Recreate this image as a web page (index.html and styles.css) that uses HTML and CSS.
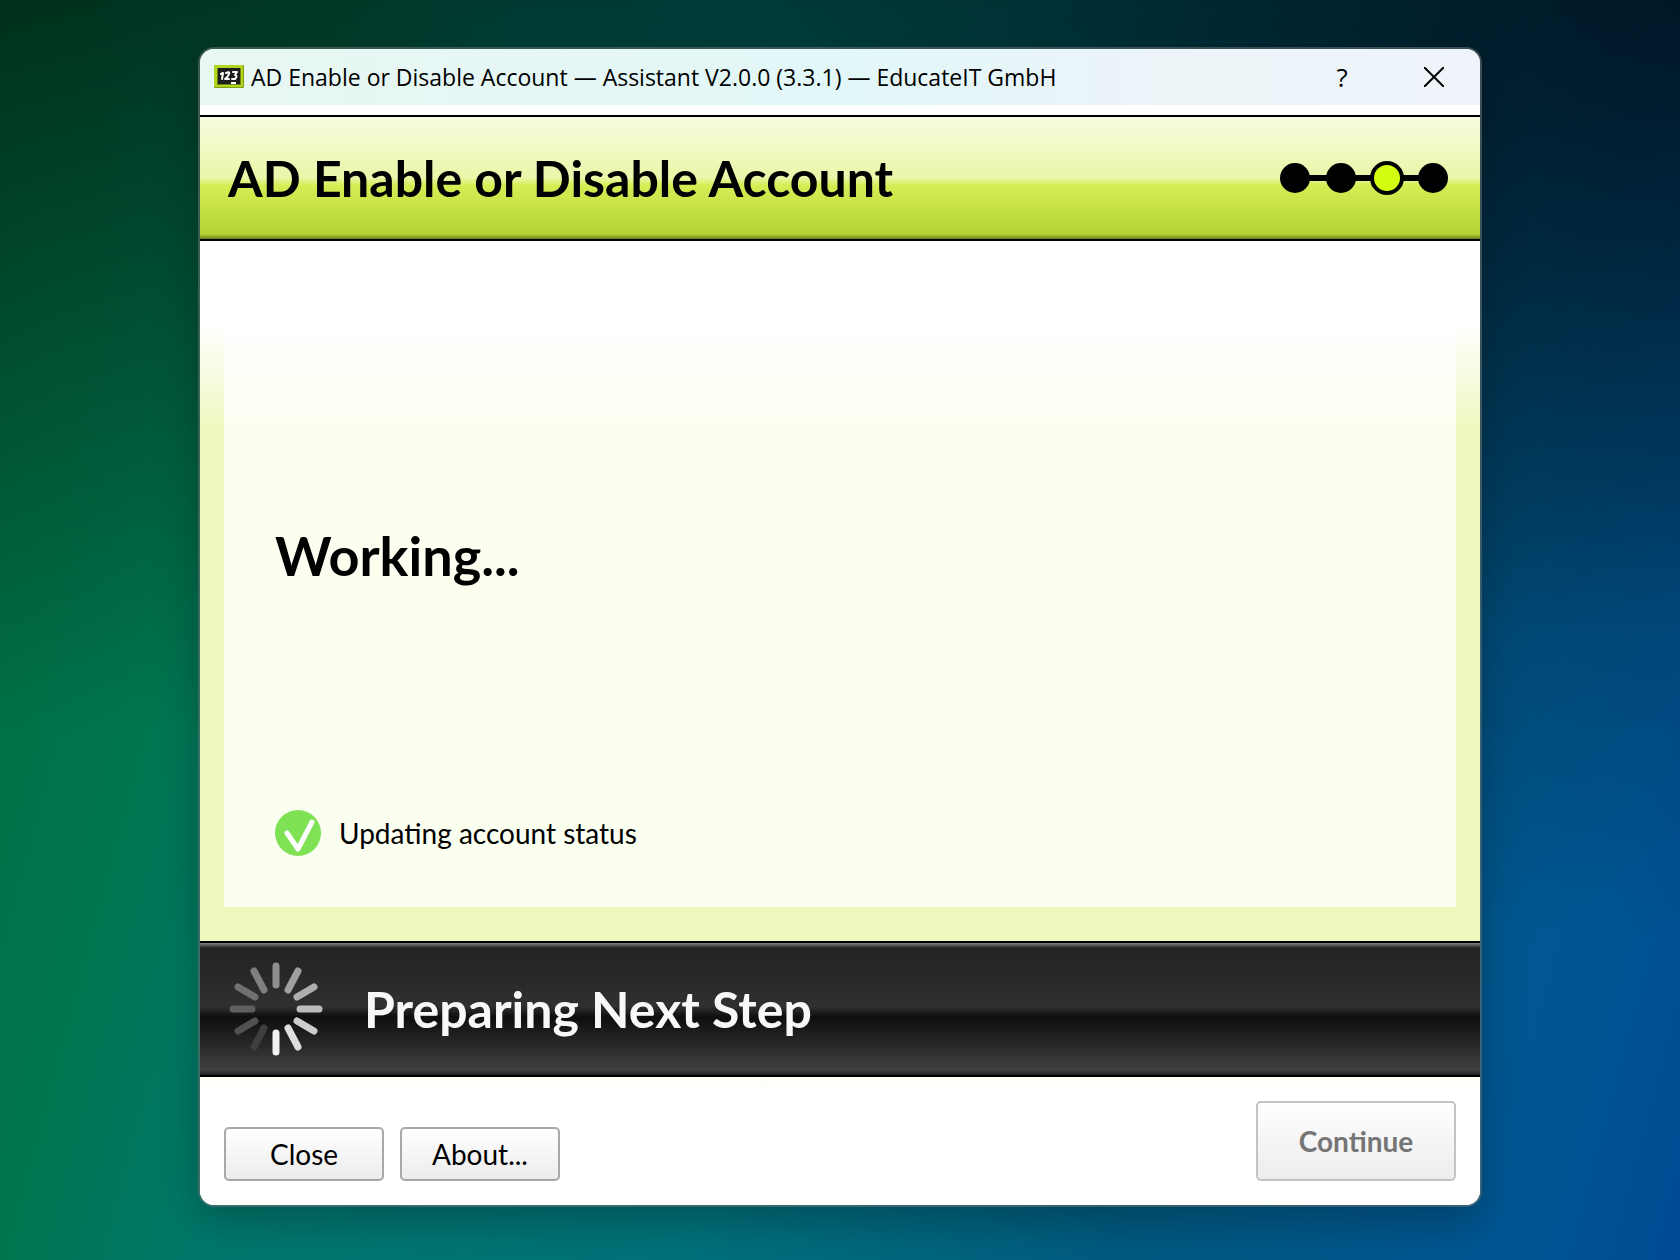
FILE: index.html
```html
<!DOCTYPE html>
<html lang="en">
<head>
  <meta charset="UTF-8" />
  <meta name="viewport" content="width=device-width, initial-scale=1.0" />
  <title>AD Enable or Disable Account</title>
  <link rel="stylesheet" href="styles.css">
</head>
<body>
  <div class="window">
    <div class="titlebar">
      <svg class="app-icon" width="30" height="24" viewBox="0 0 30 24">
        <rect width="30" height="23" rx="1" fill="#7f9c14"></rect>
        <rect width="29" height="22" rx="1" fill="#b2d522"></rect>
        <rect x="3" y="3" width="24" height="17" fill="#6b8412"></rect>
        <rect x="4" y="3" width="22" height="16" fill="#1d1d1d"></rect>
        <g fill="none" stroke="#fff" stroke-width="2" stroke-linecap="round" stroke-linejoin="round">
          <path d="M7 9l2-1-1 6"></path>
          <path d="M12 8q4-2 3 1-1 3-4 5h4"></path>
          <path d="M19 7h4l-2 3q3 1 0 4l-3 0"></path>
        </g>
        <rect x="17" y="17" width="5" height="2" fill="#fff"></rect>
      </svg>
      <span class="titlebar-text">AD Enable or Disable Account — Assistant V2.0.0 (3.3.1) — EducateIT GmbH</span>
      <button class="titlebar-btn" title="Help">?</button>
      <button class="titlebar-btn" title="Close window">
        <svg width="20" height="20" viewBox="0 0 20 20" fill="none" stroke="currentColor" stroke-width="2"><path d="M0 0l20 20M20 0L0 20"></path></svg>
      </button>
    </div>

    <header class="banner">
      <h1>AD Enable or Disable Account</h1>
      <svg class="steps" width="168" height="34" viewBox="0 0 168 34">
        <path d="M15 17h138" stroke="#000" stroke-width="6"></path>
        <circle cx="15" cy="17" r="15"></circle>
        <circle cx="61" cy="17" r="15"></circle>
        <circle cx="107" cy="17" r="15" fill="#d2ff0f" stroke="#000" stroke-width="4"></circle>
        <circle cx="153" cy="17" r="15"></circle>
      </svg>
    </header>

    <main>
      <section class="panel">
        <h2 class="panel-title">Working...</h2>
        <div class="task">
          <svg width="46" height="46" viewBox="0 0 46 46">
            <circle cx="23" cy="23" r="23" fill="#7fe154"></circle>
            <path d="M12 23l11 16 14-27" fill="none" stroke="#fff" stroke-width="5" stroke-linecap="round" stroke-linejoin="round"></path>
          </svg>
          <span>Updating account status</span>
        </div>
      </section>
    </main>

    <div class="progress">
      <svg class="spinner" width="96" height="94" viewBox="-48 -47 96 94" stroke-width="7" stroke-linecap="round">
        <path d="M0-43v19" stroke="#8f8f8f"></path>
        <path d="M22-38l-10 19" stroke="#a0a0a0"></path>
        <path d="M38-22l-17 10" stroke="#aeaeae"></path>
        <path d="M43 0h-19" stroke="#bcbcbc"></path>
        <path d="M38 22l-17-10" stroke="#cdcdcd"></path>
        <path d="M22 38l-10-19" stroke="#dedede"></path>
        <path d="M0 43v-19" stroke="#f2f2f2"></path>
        <path d="M-22 38l10-19" stroke="#3f3f3f"></path>
        <path d="M-38 22l17-10" stroke="#505050"></path>
        <path d="M-43 0h19" stroke="#5f5f5f"></path>
        <path d="M-38-22l17 10" stroke="#707070"></path>
        <path d="M-22-38l10 19" stroke="#808080"></path>
      </svg>
      <h2>Preparing Next Step</h2>
    </div>

    <footer>
      <button class="btn">Close</button>
      <button class="btn">About...</button>
      <button class="btn btn-primary" disabled>Continue</button>
    </footer>
  </div>
</body>
</html>
```
FILE: styles.css
```css
:root {
  --ink: #000;
  --lime: #eef8bd;
  --edge: rgba(96, 110, 110, 0.6);
}
* { margin: 0; padding: 0; box-sizing: border-box; }
body {
  min-height: 100vh;
  padding: 47px 198px 53px;
  display: flex;
  font-family: Lato, sans-serif;
  color: var(--ink);
  background:
    radial-gradient(ellipse 55% 75% at 100% 0%, rgba(0, 6, 16, 0.6), transparent),
    linear-gradient(176deg, rgba(0, 10, 8, 0.6), transparent 54%),
    linear-gradient(105deg, #006a3a, #007650 17%, #00786c 27%, #00727a 50%, #005a80 72%, #005694 92%, #004a94);
}
.window {
  flex: 1;
  display: flex;
  flex-direction: column;
  overflow: hidden;
  border: 2px solid var(--edge);
  border-radius: 16px;
  background: #fff;
  background-clip: padding-box;
  box-shadow: 0 16px 40px rgba(0, 0, 0, 0.25);
}
.titlebar {
  height: 56px;
  margin-bottom: 10px;
  padding-left: 14px;
  display: flex;
  align-items: center;
  background: linear-gradient(to right, #e8f7f2, #e2f7f8 50%, #ecf4f8 75%, #eef4f9);
}
.app-icon { margin-right: 7px; }
.titlebar-text {
  flex: 1;
  font-family: "Open Sans", sans-serif;
  font-size: 23px;
  line-height: 32px;
}
.titlebar-btn {
  width: 92px;
  height: 56px;
  border: none;
  background: none;
  color: var(--ink);
  font-family: "Open Sans", sans-serif;
  font-size: 26px;
}
h1, h2 { font-size: 50px; line-height: 64px; }
.banner {
  height: 126px;
  padding: 0 32px 0 28px;
  display: flex;
  align-items: center;
  justify-content: space-between;
  border-top: 2px solid #000;
  border-bottom: 2px solid #000;
  background: linear-gradient(#f6fce0, #e8f7a8 50%, #d4ef55 56%, #b4d232 96%, #6c7d1c);
}
main {
  flex: 1;
  display: flex;
  padding: 0 24px 34px;
  background: linear-gradient(#fff 84px, var(--lime) 190px);
}
.panel {
  flex: 1;
  display: flex;
  flex-direction: column;
  justify-content: flex-end;
  gap: 222px;
  padding: 51px;
  background: linear-gradient(#fff 84px, #fbfff0 190px);
}
.panel-title { font-size: 54px; }
.task {
  display: flex;
  align-items: center;
  gap: 18px;
  font-size: 28px;
  line-height: 32px;
}
.progress {
  height: 136px;
  padding: 0 28px;
  display: flex;
  align-items: center;
  gap: 40px;
  border-top: 2px solid #000;
  border-bottom: 2px solid #000;
  background: linear-gradient(#808080, #5c5c5c 2px, #222 5px, #303030 48%, #0e0e0e 56%, #404040 96%, #222);
  color: #f8f8f8;
}
footer {
  padding: 24px;
  display: flex;
  align-items: flex-end;
  gap: 16px;
  background: linear-gradient(#fffff6, #fff 16px);
}
.btn {
  width: 160px;
  height: 54px;
  border: 2px solid #a8a8a8;
  border-radius: 5px;
  background: linear-gradient(#fff, #ececec);
  color: var(--ink);
  font-family: inherit;
  font-size: 28px;
  line-height: 32px;
}
.btn-primary {
  width: 200px;
  height: 80px;
  margin-left: auto;
  border-color: #c3c3c3;
  color: #757575;
  font-weight: bold;
}
```
